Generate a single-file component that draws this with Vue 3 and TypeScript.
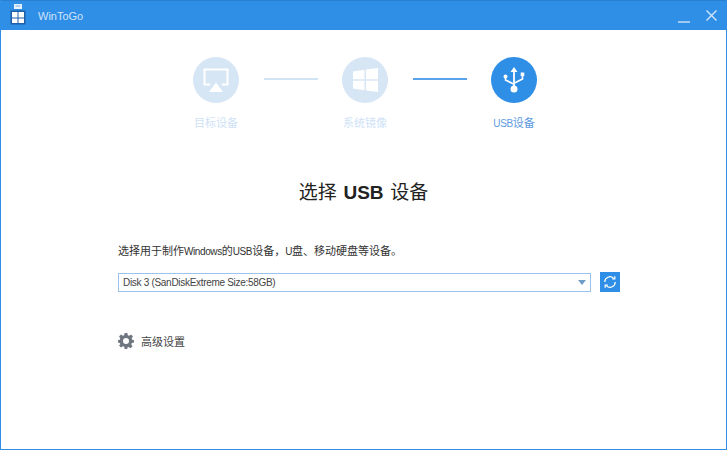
<script setup lang="ts">
const steps = [
  { label: '目标设备', kind: 'screen', active: false },
  { label: '系统镜像', kind: 'win', active: false },
  { label: 'USB设备', kind: 'usb', active: true },
]
</script>

<template>
  <div class="window">
    <header class="titlebar">
      <svg class="logo" width="16" height="21" viewBox="0 0 16 21">
        <rect x="4" y="0" width="8" height="5" fill="#e8f2fc" />
        <rect x="5.500" y="1.500" width="5" height="1" fill="#7fb2ea" />
        <rect x="0.500" y="6.500" width="15" height="14" fill="#1f5fa8" />
        <rect x="2" y="8" width="5.500" height="5.500" fill="#fff" />
        <rect x="8.500" y="8" width="5.500" height="5.500" fill="#fff" />
        <rect x="2" y="14.500" width="5.500" height="4.500" fill="#fff" />
        <rect x="8.500" y="14.500" width="5.500" height="4.500" fill="#fff" />
      </svg>
      <span class="title">WinToGo</span>
      <span class="spacer"></span>
      <svg class="winbtn min" width="12" height="12" viewBox="0 0 12 12"><path d="M0 11h12" stroke="#c6def8" stroke-width="1.500" /></svg>
      <svg class="winbtn close" width="11" height="11" viewBox="0 0 11 11"><path d="M.5.500l10 10M10.500.500l-10 10" stroke="#d4e6fa" stroke-width="1.400" /></svg>
    </header>

    <main class="body">
      <div class="steps">
        <template v-for="(s, i) in steps" :key="s.label">
          <div v-if="i > 0" class="link" :class="{ on: s.active }"></div>
          <div class="step" :class="{ on: s.active }">
            <div class="circle">
              <svg v-if="s.kind === 'screen'" width="26" height="25" viewBox="0 0 26 25">
                <path d="M7 16.500H1.500V1.500h23v15H19" fill="none" stroke="#fff" stroke-width="2" />
                <path d="M13 14.500l7 9.500H6z" fill="#fff" />
              </svg>
              <svg v-else-if="s.kind === 'win'" width="25" height="24" viewBox="0 0 25 24">
                <path d="M0 3.500l11.500-1.700v9.500H0zM13 1.600L25 0v11.300H13zM0 12.700h11.500v9.500L0 20.500zM13 12.700h12V24l-12-1.600z" fill="#fff" />
              </svg>
              <svg v-else width="22" height="26" viewBox="0 0 22 26">
                <path d="M11 0l3.500 5h-2.600v15h-1.800V5H7.500z" fill="#fff" />
                <circle cx="11" cy="22" r="3.500" fill="#fff" />
                <path d="M2.500 10v3l8 4M19.500 9v3l-8 4" fill="none" stroke="#fff" stroke-width="1.600" />
                <circle cx="2.500" cy="9.500" r="2" fill="#fff" />
                <rect x="17.700" y="5.500" width="3.600" height="3.600" fill="#fff" />
              </svg>
            </div>
            <div class="label"><template v-if="s.active"><span class="lat">USB</span>设备</template><template v-else>{{ s.label }}</template></div>
          </div>
        </template>
      </div>

      <h1 class="heading">选择 <b>USB</b> 设备</h1>

      <p class="desc">选择用于制作<span class="lat">Windows</span>的<span class="lat">USB</span>设备，<span class="lat">U</span>盘、移动硬盘等设备。</p>

      <div class="picker">
        <div class="select">
          <span>Disk 3 (SanDiskExtreme Size:58GB)</span>
          <i class="arrow"></i>
        </div>
        <button class="refresh" type="button" aria-label="刷新">
          <svg width="14" height="14" viewBox="0 0 16 16" fill="none" stroke="#fff" stroke-width="1.400">
            <path d="M2 8a6 6 0 0 1 10-4.400" />
            <path d="M14 8a6 6 0 0 1-10 4.400" />
            <path d="M13.500 1.500v3h-3" />
            <path d="M2.500 14.500v-3h3" />
          </svg>
        </button>
      </div>

      <div class="advanced">
        <svg width="16" height="16" viewBox="0 0 24 24">
          <path fill="#6f7680" fill-rule="evenodd" d="M10 0h4l.7 3.300 2 .8L19.600 2.300l2.800 2.800-1.800 2.900.8 2L24 10.700v3.600l-3.300.7-.8 2 1.800 2.900-2.800 2.800-2.900-1.800-2 .8L14 24h-4l-.7-3.300-2-.8-2.900 1.800-2.800-2.800L3.400 17l-.8-2L0 14.300v-3.600l2.600-.7.800-2-1.800-2.900 2.800-2.800 2.900 1.800 2-.8zM12 7.500a4.500 4.500 0 1 0 0 9 4.500 4.500 0 0 0 0-9z" />
        </svg>
        <span>高级设置</span>
      </div>
    </main>
  </div>
</template>

<style>
html, body { margin: 0; background: #fff; }
</style>

<style scoped>
.window {
  width: 727px;
  height: 450px;
  box-sizing: border-box;
  border: 1px solid #2f8ee6;
  border-top: 0;
  overflow: hidden;
  font-family: "Liberation Sans", "Noto Sans CJK SC", sans-serif;
  color: #333;
  background: #fff;
}
.titlebar {
  height: 30px;
  margin: 0 -1px;
  box-sizing: border-box;
  background: #2f8ee6;
  border-top: 1px solid #2a80d0;
  display: flex;
  align-items: center;
  padding: 0 10px 0 10px;
}
.logo { margin-right: 12px; margin-top: -2px; }
.title { font-size: 11px; color: #cfe3f9; }
.spacer { flex: 1; }
.min { margin-right: 16px; margin-top: 3px; }
.close { margin-top: -1px; }
.body { padding: 27px 106px 0 117px; }
.steps { display: flex; justify-content: flex-start; align-items: flex-start; margin-left: 75px; }
.step { width: 46px; display: flex; flex-direction: column; align-items: center; opacity: .3; }
.step.on { opacity: 1; }
.circle {
  width: 46px; height: 46px; border-radius: 50%;
  background: #7aaee0;
  display: flex; align-items: center; justify-content: center;
}
.step.on .circle { background: #2f8ee6; }
.label { margin-top: 12px; font-size: 11px; line-height: 16px; white-space: nowrap; color: #5b9ee6; }
.step.on .label { color: #5d9adf; }
.lat { font-size: 10px; letter-spacing: -.4px; }
.link { width: 54px; height: 2px; margin: 21px 24px 0 25px; background: #d2e3f5; }
.link.on { background: #5ba3ea; }
.heading { margin: 48px 0 0; font-size: 19px; line-height: 26px; font-weight: 400; text-align: center; color: #222; padding-right: 11px; word-spacing: 1.500px; }
.heading b { font-weight: 700; }
.desc { margin: 37px 0 0; font-size: 11px; line-height: 16px; color: #333; }
.picker { display: flex; align-items: center; gap: 9px; margin-top: 12px; }
.select {
  width: 473px; height: 19px; box-sizing: border-box;
  border: 1px solid #9cc3ee;
  display: flex; align-items: center; justify-content: space-between;
  padding: 0 4px;
  font-size: 10px; letter-spacing: -.3px; color: #444;
}
.arrow { width: 0; height: 0; border: 4px solid transparent; border-top: 5px solid #6f9cc9; border-bottom: 0; }
.refresh { width: 20px; height: 20px; padding: 0; border: 0; background: #2f8ee6; display: flex; align-items: center; justify-content: center; }
.advanced { display: flex; align-items: center; gap: 7px; margin-top: 41px; font-size: 11px; color: #444; }
</style>
